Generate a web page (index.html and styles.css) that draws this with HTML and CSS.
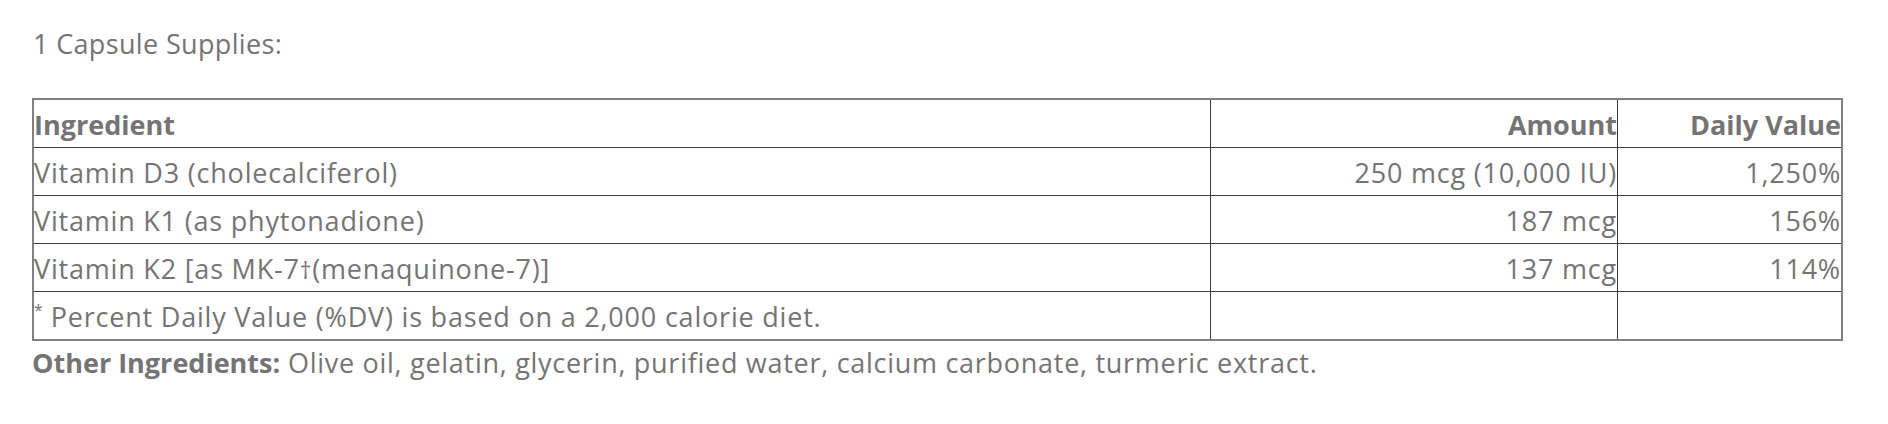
FILE: index.html
```html
<!DOCTYPE html>
<html lang="en">
<head>
<meta charset="utf-8">
<title>Supplement Facts</title>
<link rel="stylesheet" href="styles.css">
</head>
<body>
<div class="facts">
  <p class="serving">1 Capsule Supplies:</p>
  <table class="facts-table">
    <thead>
      <tr>
        <th class="col-name">Ingredient</th>
        <th class="col-amount">Amount</th>
        <th class="col-dv">Daily Value</th>
      </tr>
    </thead>
    <tbody>
      <tr>
        <td>Vitamin D3 (cholecalciferol)</td>
        <td class="num">250 mcg (10,000 IU)</td>
        <td class="num">1,250%</td>
      </tr>
      <tr>
        <td>Vitamin K1 (as phytonadione)</td>
        <td class="num">187 mcg</td>
        <td class="num">156%</td>
      </tr>
      <tr>
        <td>Vitamin K2 [as MK-7<span class="dagger">†</span>(menaquinone-7)]</td>
        <td class="num">137 mcg</td>
        <td class="num">114%</td>
      </tr>
      <tr>
        <td><sup class="star">*</sup> Percent Daily Value (%DV) is based on a 2,000 calorie diet.</td>
        <td></td>
        <td></td>
      </tr>
    </tbody>
  </table>
  <p class="other"><strong>Other Ingredients:</strong> Olive oil, gelatin, glycerin, purified water, calcium carbonate, turmeric extract.</p>
</div>
</body>
</html>
```

FILE: styles.css
```css
html, body {
  margin: 0;
  padding: 0;
  background: #ffffff;
}

.facts {
  padding: 24px 45px 0 32px;
  font-family: "Open Sans", "Noto Sans", sans-serif;
  font-size: 27px;
  letter-spacing: 0.8px;
  color: #747474;
}

.serving {
  margin: 0 0 34px 1px;
  line-height: 40px;
  letter-spacing: 0.35px;
}

.facts-table {
  width: 100%;
  border-collapse: collapse;
  border: 2px solid #808080;
}

.facts-table th,
.facts-table td {
  border: 1px solid #3c3c3c;
  padding: 2px 0 0 0;
  height: 45px;
  line-height: 45px;
  text-align: left;
  font-weight: 400;
  white-space: nowrap;
}

.facts-table th {
  font-weight: 700;
  letter-spacing: 0;
}

.facts-table .col-name { width: 1176px; }
.facts-table .col-amount { width: 406px; text-align: right; }
.facts-table .col-dv { text-align: right; }

.facts-table td.num {
  text-align: right;
}

.dagger {
  font-size: 23px;
  line-height: 1;
}

.star {
  font-size: 16px;
  line-height: 0;
  vertical-align: 11px;
  letter-spacing: 0;
}

.other {
  margin: 3px 0 0 0;
  line-height: 38px;
  letter-spacing: 0.72px;
}

.other strong {
  font-weight: 700;
  letter-spacing: 0;
}
```
